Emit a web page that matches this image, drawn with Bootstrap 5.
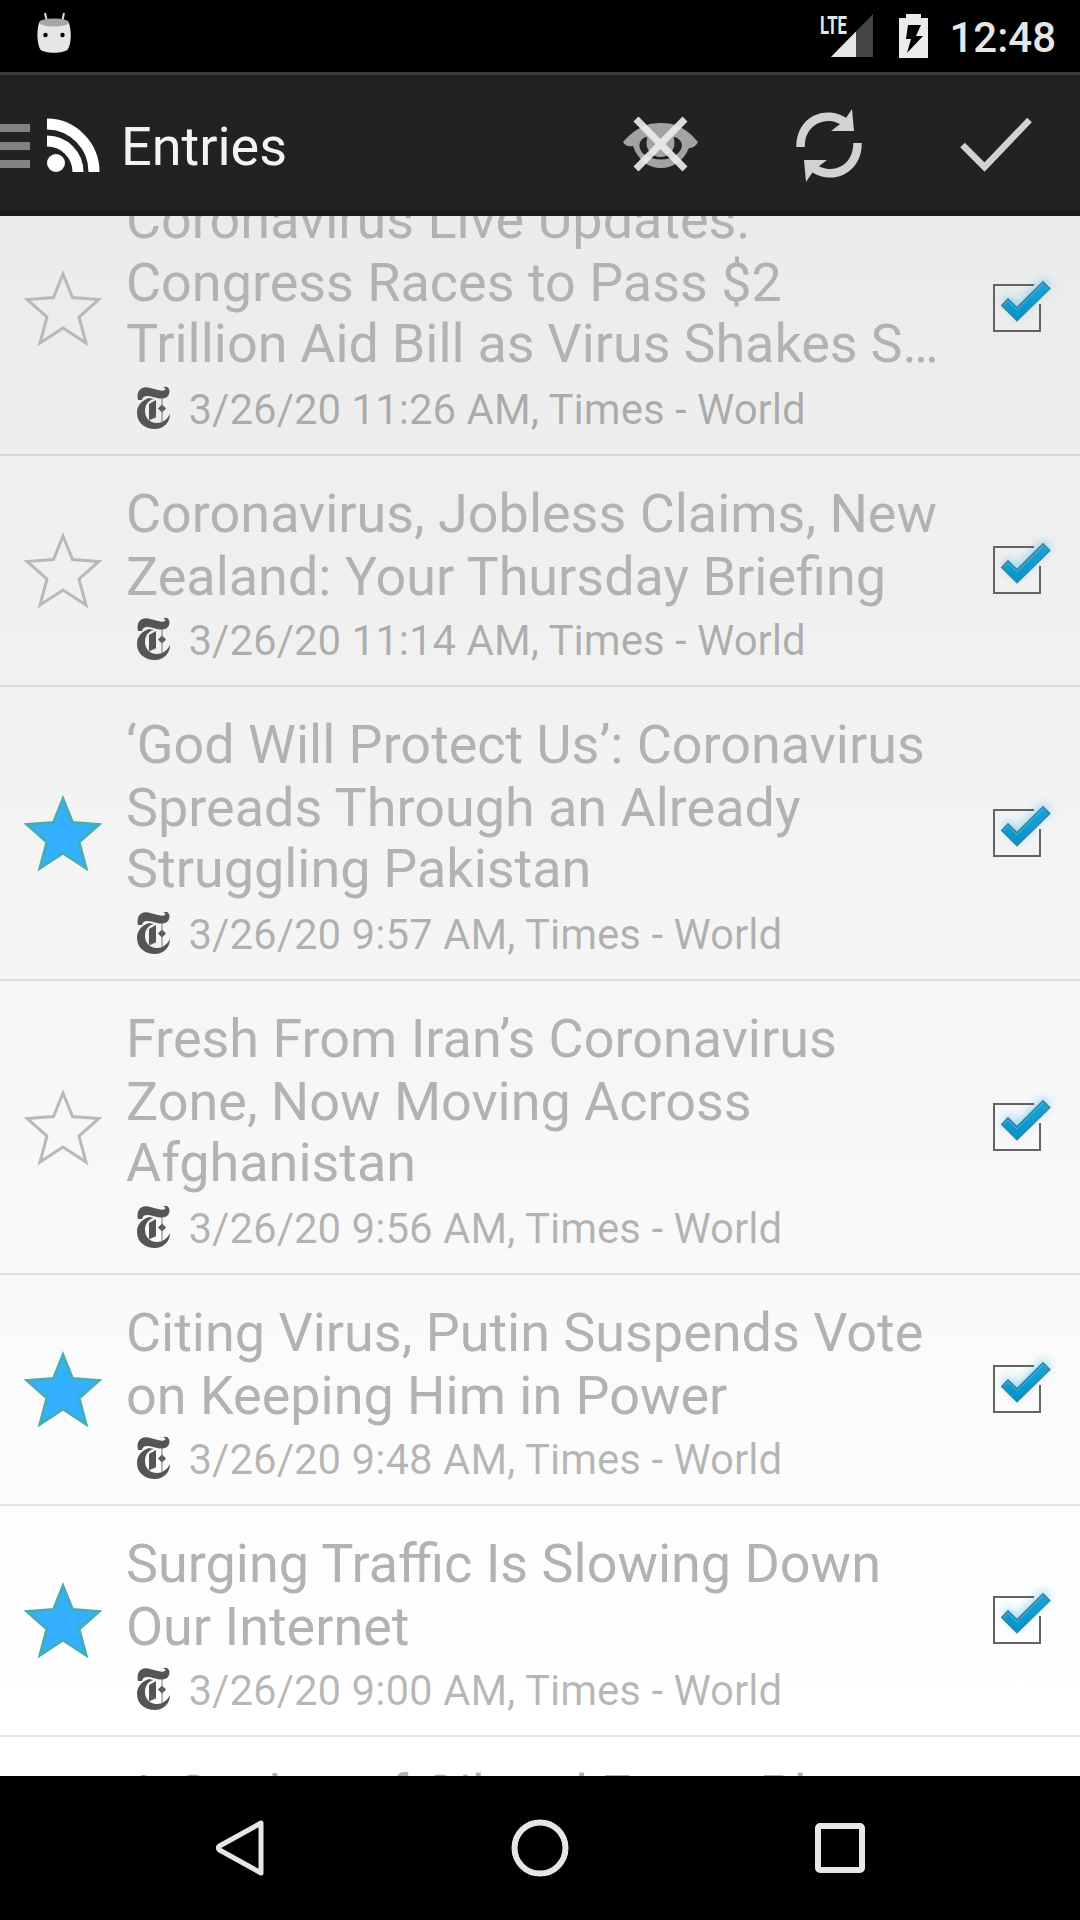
<!DOCTYPE html>
<html lang="en" data-bs-theme="light">
<head>
<meta charset="utf-8">
<meta name="viewport" content="width=device-width, initial-scale=1">
<title>Entries</title>
<link href="https://cdn.jsdelivr.net/npm/bootstrap@5.3.0/dist/css/bootstrap.min.css" rel="stylesheet">
<style>
body{font-family:Roboto,"Liberation Sans",sans-serif;width:1080px;height:1920px;overflow:hidden;background:#000}
svg{display:block;flex:none;overflow:visible}
.statusbar{height:72px;background:#000;color:#e6e6e6;font-size:42px;font-weight:500;line-height:72px}
.ic-droid{margin:-7px 0 0 37px}
.ic-signal{margin-right:25px}
.ic-battery{margin-right:20px}
.clock{padding-top:3px;margin-right:24px}
.actionbar{height:144px;background:#222;border-top:3px solid #3c3c3c;border-bottom:6px solid #1b1b1b}
.ic-drawer{margin-top:7px}
.ic-rss{margin:4px 0 0 17px}
.bar-title{font-size:54px;line-height:60px;color:#f3f3f3;margin-left:20px;padding-top:8px}
.bar-actions{padding:3px 48px 0 0}
.ic-sync{margin:3px 98px 0 97px}
.feed{height:1560px;overflow:hidden;background:linear-gradient(#ebebeb,#fff 95%)}
.feed-scroll{margin-top:-54px}
.entry{height:231px;border-bottom:2px solid rgba(0,0,0,.1)}
.entry.tall{height:294px}
.entry-body{padding-top:26px}
.headline{font-size:53.93px;color:#b2b2b2;white-space:nowrap}
.headline>span{display:block;line-height:63px;height:63px}
.tall .headline>span:nth-child(3){margin-top:-2px;margin-bottom:2px;word-spacing:-.6px}
.meta-line{font-size:42px;line-height:50px;color:rgba(0,0,0,.28);white-space:nowrap;margin-top:8px}
.tall .meta-line{margin-top:10px}
.side-col{width:126px;flex:none}
.ic-star{margin:0 0 0 24px}
.tall .ic-star{margin-top:2px}
.ic-check{margin:-2px 0 0 39px}
.tall .ic-check{margin-top:0}
.ic-source{margin:-5px 18px 0 10.500px}
.navkeys{height:144px;background:#000;gap:246px}
</style>
</head>
<body>
<svg width="0" height="0" class="position-absolute">
<defs>
<symbol id="star" viewBox="0 0 78 78"><path d="M39 4 48.500 27.500 75 29.500 55 47 62 73 39 58 16 73 23 47 3 29.500 29.500 27.500Z"/></symbol>
<filter id="glow" x="-50%" y="-50%" width="200%" height="200%"><feGaussianBlur stdDeviation="5"/></filter>
<linearGradient id="tick" x1="0" y1="0" x2="0" y2="1"><stop offset="0" stop-color="#1ba4da"/><stop offset="1" stop-color="#0093c8"/></linearGradient>
<g id="checkbox">
<path d="M9 18 15 11 24 20 50-6 58 1 24 34Z" fill="#5cc8f2" opacity=".65" filter="url(#glow)"/>
<path d="M41 1H1V47H47V20" fill="none" stroke="#636363" stroke-width="2"/>
<path d="M8.500 21.500 15 14.500 24 23.500 50-2.500 57 4.500 24 37Z" fill="url(#tick)" stroke="#4c7e90" stroke-width="1.200"/>
<path d="M11 21 15 17 24 26 50 0" fill="none" stroke="#6ac3e6" stroke-width="1" opacity=".6"/>
</g>
<g id="tee" fill="#555">
<path d="M1 14C-1 5 4 0 11 1.500 19 3 24 6 28 4 29 3 28 1.500 26 1.500 30-1 34 3 32 8 30 14 22 13 16 11 10 9.500 6 9 5 14Z"/>
<path d="M12 12C3 15 0 21 0 27 0 37 8 43 18 43 27 43 33 36 33 28 30 34 25 37 20 37 12 37 8 31 8 25 8 18 12 14 17 13Z"/>
<path d="M12 18 19 14V31L12 34ZM21 22.500 25 18.500 29 22.500 25 26.500Z"/>
<path d="M12 34 19 31M25 12V37" stroke="#777" stroke-width="1" fill="none"/>
</g>
</defs>
</svg>

<header class="statusbar d-flex align-items-center justify-content-between">
<svg class="ic-droid" width="36" height="42" viewBox="0 0 36 42"><path d="M8 1 10 10M27 1 25 10" stroke="#ddd" stroke-width="2"/><path d="M2 11C-.5 19 0 31 3 37 6 42 28 42 31 37 34.500 31 34.500 19 32 11Z" fill="#e6e6e6"/><ellipse cx="17" cy="10.500" rx="15" ry="4" fill="#a6a6a6"/><circle cx="8.500" cy="23" r="2.200"/><circle cx="25.500" cy="23" r="2.200"/></svg>
<div class="d-flex align-items-center">
<svg class="ic-signal" width="54" height="44" viewBox="0 0 54 44"><path d="M53 0V43H11Z" fill="#444"/><path d="M36 17.400V43H11Z" fill="#e6e6e6"/><text x="0" y="19.500" font-family="Roboto" font-weight="700" font-size="26.500" textLength="27" lengthAdjust="spacingAndGlyphs" fill="#e6e6e6">LTE</text></svg>
<svg class="ic-battery" width="30" height="44" viewBox="0 0 30 44"><path d="M7 0H22V4H29V44H0V4H7Z" fill="#ebebeb"/><path d="M9 11H22L17 22H24L8 39 12 25H7Z" fill="#000"/></svg>
<span class="clock">12:48</span>
</div>
</header>

<nav class="actionbar d-flex align-items-center">
<svg class="ic-drawer" width="30" height="44" viewBox="0 0 30 44"><path d="M0 0H30V8H0ZM0 18H30V26H0ZM0 36H30V44H0Z" fill="#818286"/></svg>
<svg class="ic-rss" width="54" height="54" viewBox="0 0 54 54"><circle cx="9" cy="45" r="9" fill="#fff"/><path d="M0 23A31 31 0 0 1 31 54M0 6A47.500 48 0 0 1 47 54" fill="none" stroke="#fff" stroke-width="11"/></svg>
<span class="bar-title">Entries</span>
<div class="bar-actions d-flex align-items-center ms-auto">
<svg class="ic-eye" width="76" height="54" viewBox="0 0 76 54"><path fill-rule="evenodd" d="M0 25C13 10 25 6 38 6S63 10 75 25C73 29 70 31 66 31 61 43 51 51 38 51S15 43 10 29C6 30 2 29 0 25ZM23 20C13 24 16 34 22 38 31 44 45 44 53 38 60 33 62 24 52 20 49 22 47 20 38 20S26 22 23 20Z" fill="#a3a3a3"/><circle cx="37.500" cy="26" r="14" fill="#a3a3a3"/><path d="M13 2 62 52M62 2 13 52" stroke="#eee" stroke-width="7" opacity=".9"/></svg>
<svg class="ic-sync" width="66" height="74" viewBox="0 0 66 74"><g fill="none" stroke="#d2d2d2" stroke-width="8.500"><path d="M4.500 38C4 12 30-1 50 14"/><path d="M61.500 34C62 60 36 73 16 58"/></g><path d="M56 0 58 22H35L48 12ZM10 73 8 51H31L18 61Z" fill="#d2d2d2"/></svg>
<svg class="ic-done" width="72" height="54" viewBox="0 0 72 54"><path d="M2.500 28 24.500 50 69.500 3" fill="none" stroke="#d2d2d2" stroke-width="6.500"/></svg>
</div>
</nav>

<main class="feed"><div class="feed-scroll" id="feed"></div></main>

<footer class="navkeys d-flex align-items-center justify-content-center">
<svg width="50" height="58" viewBox="0 0 50 58"><path d="M46 4V54L4.500 31Q2 29 4.500 27Z" fill="none" stroke="#e6e6e6" stroke-width="5" stroke-linejoin="round"/></svg>
<svg width="58" height="58" viewBox="0 0 58 58"><circle cx="29" cy="29" r="25.500" fill="none" stroke="#e6e6e6" stroke-width="6"/></svg>
<svg width="50" height="50" viewBox="0 0 50 50"><rect x="3" y="3" width="44" height="44" rx="2" fill="none" stroke="#e6e6e6" stroke-width="6"/></svg>
</footer>
<script>
const entries=[
[0,"11:26",["Coronavirus Live Updates:","Congress Races to Pass $2","Trillion Aid Bill as Virus Shakes S…"]],
[0,"11:14",["Coronavirus, Jobless Claims, New","Zealand: Your Thursday Briefing"]],
[1,"9:57",["‘God Will Protect Us’: Coronavirus","Spreads Through an Already","Struggling Pakistan"]],
[0,"9:56",["Fresh From Iran’s Coronavirus","Zone, Now Moving Across","Afghanistan"]],
[1,"9:48",["Citing Virus, Putin Suspends Vote","on Keeping Him in Power"]],
[1,"9:00",["Surging Traffic Is Slowing Down","Our Internet"]],
[0,"",["A Gusher of Oil and Fewer Places"]]];
document.getElementById("feed").innerHTML=entries.map(([s,t,l])=>`<article class="entry d-flex ${l.length>2?"tall":""}">
<div class="side-col d-flex align-items-center">${t?`<svg class="ic-star" width="78" height="78" fill="${s?"#33b0ff":"none"}" stroke="${s?"#45adb8":"#b9b9b9"}" stroke-width="3"><use href="#star"/></svg>`:""}</div>
<div class="entry-body flex-grow-1"><div class="headline">${l.map(x=>`<span>${x}</span>`).join("")}</div>
${t?`<div class="meta-line d-flex align-items-center"><svg class="ic-source" width="34" height="44"><use href="#tee"/></svg><span>3/26/20 ${t} AM, Times - World</span></div>`:""}</div>
<div class="side-col d-flex align-items-center">${t?`<svg class="ic-check" width="48" height="48"><use href="#checkbox"/></svg>`:""}</div></article>`).join("");
</script>
<script src="https://cdn.jsdelivr.net/npm/bootstrap@5.3.0/dist/js/bootstrap.bundle.min.js"></script>
</body>
</html>
